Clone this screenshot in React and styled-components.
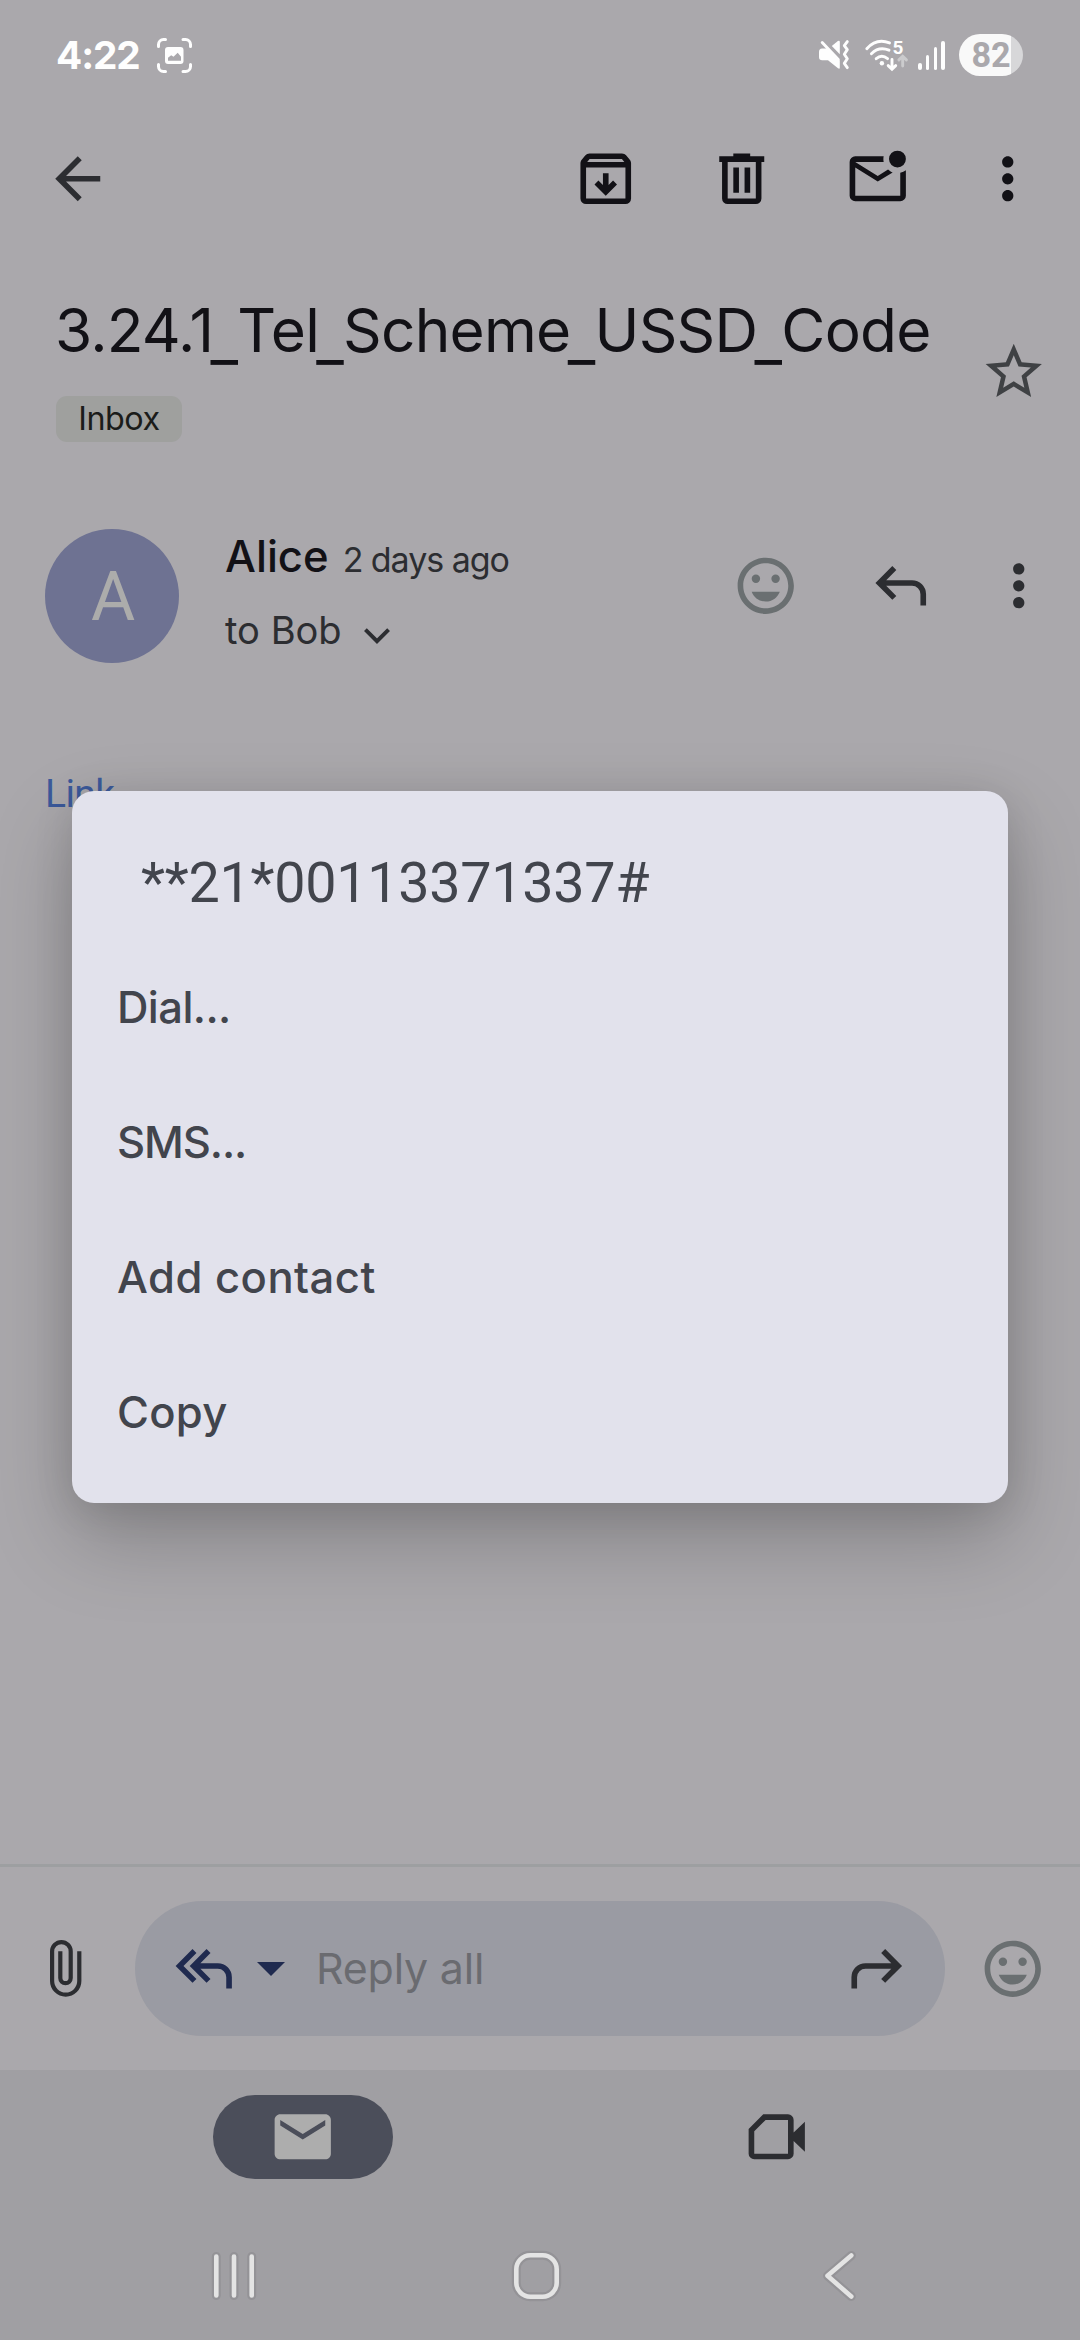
import React from "react";
import styled, { createGlobalStyle } from "styled-components";

const color = {
  surface: "#aaa8ac",
  navSurface: "#a09fa3",
  ink: "#121116",
  inkSoft: "#2c2d31",
  inkMuted: "#3f4144",
  smiley: "#6a6f71",
  white: "#fefefe",
};

const sans = `Inter, "Google Sans", Roboto, sans-serif`;
const roboto = `Roboto, "Noto Sans", sans-serif`;

const GlobalStyle = createGlobalStyle`
  * { box-sizing: border-box; }
  html, body { margin: 0; background: ${color.surface}; }
`;

/* ---------- shared ---------- */

const Screen = styled.div`
  position: relative;
  display: flex;
  flex-direction: column;
  width: 1080px;
  height: 2340px;
  overflow: hidden;
  background: ${color.surface};
  font-family: ${sans};
  color: ${color.ink};
`;

const Glyph = styled.svg`
  display: block;
  flex: none;
  width: ${(p) => p.$w || 67.5}px;
  height: ${(p) => p.$h || p.$w || 67.5}px;
  overflow: visible;
`;

const IconButton = styled.button`
  display: flex;
  flex: none;
  padding: 0;
  border: 0;
  background: none;
  color: ${(p) => p.$color || color.ink};
`;

const PATHS = {
  back: "M20 11H7.83l5.59-5.59L12 4l-8 8 8 8 1.41-1.41L7.83 13H20v-2z",
  archive:
    "M5 21q-.825 0-1.412-.587T3 19V6.525q0-.35.113-.675t.337-.6L4.7 3.725q.275-.35.687-.538T6.25 3h11.5q.45 0 .863.188t.687.537l1.25 1.525q.225.275.338.6t.112.675V19q0 .825-.587 1.413T19 21zm.4-15h13.2l-.85-1H6.25zM5 19h14V8H5zm7-1 4-4-1.4-1.4-1.6 1.6V10h-2v4.2l-1.6-1.6L8 14z",
  trash:
    "M7 21q-.825 0-1.412-.587T5 19V6H4V4h5V3h6v1h5v2h-1v13q0 .825-.587 1.413T17 21zM17 6H7v13h10zM9 17h2V8H9zm4 0h2V8h-2z",
  unread:
    "M4 20q-.825 0-1.412-.587T2 18V6q0-.825.588-1.412T4 4h10.1q-.1.5-.1 1t.1 1H4l8 5 3.65-2.275q.375.325.788.588t.862.462L12 13 4 8v10h16V9.9q.575-.125 1.075-.35T22 9v9q0 .825-.587 1.413T20 20zM19 8q-1.25 0-2.125-.875T16 5t.875-2.125T19 2t2.125.875T22 5t-.875 2.125T19 8",
  more: "M12 8c1.1 0 2-.9 2-2s-.9-2-2-2-2 .9-2 2 .9 2 2 2zm0 2c-1.1 0-2 .9-2 2s.9 2 2 2 2-.9 2-2-.9-2-2-2zm0 6c-1.1 0-2 .9-2 2s.9 2 2 2 2-.9 2-2-.9-2-2-2z",
  star: "M22 9.24l-7.19-.62L12 2 9.19 8.63 2 9.24l5.46 4.73L5.82 21 12 17.27 18.18 21l-1.63-7.03L22 9.24zM12 15.4l-3.76 2.27 1-4.28-3.32-2.88 4.38-.38L12 6.1l1.71 4.04 4.38.38-3.32 2.88 1 4.28L12 15.4z",
  smile:
    "M11.99 2C6.47 2 2 6.48 2 12s4.47 10 9.99 10C17.52 22 22 17.52 22 12S17.52 2 11.99 2zM12 20c-4.42 0-8-3.58-8-8s3.58-8 8-8 8 3.58 8 8-3.58 8-8 8zM15.5 11a1.5 1.5 0 1 0 0-3 1.5 1.5 0 0 0 0 3zM8.5 11a1.5 1.5 0 1 0 0-3 1.5 1.5 0 0 0 0 3zM12 17.6c2.3 0 4.2-1.4 5-3.5H7c.8 2.1 2.7 3.5 5 3.5z",
  reply:
    "M19 19v-4q0-1.25-.875-2.125T16 12H6.825l3.6 3.6L9 17l-6-6 6-6 1.425 1.4-3.6 3.6H16q2.075 0 3.538 1.463T21 15v4z",
  replyAll:
    "M8 17 2 11l6-6 1.4 1.4L4.8 11l4.6 4.6zM20 19v-4q0-1.25-.875-2.125T17 12h-6.2l3.6 3.6L13 17l-6-6 6-6 1.4 1.4-3.6 3.6H17q2.075 0 3.538 1.463T22 15v4z",
  forward:
    "M5 19v-4q0-1.25.875-2.125T8 12h9.175l-3.6 3.6L15 17l6-6-6-6-1.425 1.4 3.6 3.6H8q-2.075 0-3.538 1.463T3 15v4z",
  mail: "M20 4H4c-1.1 0-2 .9-2 2v12c0 1.1.9 2 2 2h16c1.1 0 2-.9 2-2V6c0-1.1-.9-2-2-2zm0 4l-8 5-8-5V6l8 5 8-5v2z",
  video:
    "M7.2 4H16a2 2 0 0 1 2 2v12a2 2 0 0 1-2 2H4a2 2 0 0 1-2-2V9.2zM8.05 6 4 10.05V18h12V6zM18 10.5l4-3.8v10.6l-4-3.8z",
};

const Icon = ({ name }) => (
  <Glyph viewBox="0 0 24 24" fill="currentColor" aria-hidden="true">
    <path fillRule="evenodd" d={PATHS[name]} />
  </Glyph>
);

/* ---------- status bar ---------- */

const StatusBar = styled.header`
  display: flex;
  flex: none;
  align-items: center;
  height: 110px;
  padding: 0 57px 0 56px;
  color: ${color.white};
`;

const Clock = styled.time`
  width: 101px;
  font: 700 38.8px/60px ${sans};
  letter-spacing: -1.1px;
`;

const StatusIcons = styled.div`
  display: flex;
  align-items: center;
  margin-left: auto;
`;

const SignalBars = styled.div`
  display: flex;
  align-items: flex-end;
  gap: 4.1px;
  height: 29px;
  margin: 0 14px 0 9.5px;
`;

const SignalBar = styled.i`
  width: 3.7px;
  height: ${(p) => p.$h}px;
  border-radius: 2px;
  background: ${color.white};
`;

const Battery = styled.div`
  display: flex;
  align-items: center;
  justify-content: center;
  width: 64px;
  height: 42px;
  border-radius: 21px;
  background: linear-gradient(90deg, #f9f9f9 51.7px, #d7d7d9 51.7px);
  color: ${color.surface};
  font: 700 34.2px/42px ${roboto};
`;

const ScanIcon = () => (
  <Glyph $w={35} viewBox="0 0 35 35" fill="none">
    <path
      d="M1.5 8.5v-2a5 5 0 0 1 5-5h2M26 1.5h2.5a5 5 0 0 1 5 5v2M33.5 26.5v2a5 5 0 0 1-5 5H26M8.5 33.5h-2a5 5 0 0 1-5-5v-2"
      stroke="#fefefe"
      strokeWidth="3"
      strokeLinecap="round"
    />
    <path
      fill="#fefefe"
      fillRule="evenodd"
      d="M11 9h12.5a3 3 0 0 1 3 3v11a3 3 0 0 1-3 3H11a3 3 0 0 1-3-3V12a3 3 0 0 1 3-3zM11 22.8h13v-4.1l-3.3-4-4.2 4-2.3-1.5L11 19.7z"
    />
  </Glyph>
);

const MuteIcon = () => (
  <Glyph $w={30} viewBox="0 0 30 30" fill="#fefefe">
    <path d="M3 8.5h5.5L20.8 20.5v7q0 2-1.8.8L9 20.3H3.2Q0 20.3 0 17v-5q0-3.5 3-3.5z" />
    <path d="M12.8 5.9 18.9 1q1.9-1 1.9 1v12.2z" />
    <path
      d="M3.2 2.5 19.3 19.5M28.3 1.6 25.3 5.6l3 4-3 4.6 3 4.6-3 4.6 3 4.2"
      fill="none"
      stroke="#fefefe"
      strokeWidth="2.9"
      strokeLinecap="round"
      strokeLinejoin="round"
    />
  </Glyph>
);

const WifiIcon = styled(({ className }) => (
  <svg className={className} viewBox="0 0 43 32" fill="none">
    <g stroke="#fefefe" strokeWidth="2.9" strokeLinecap="round">
      <path d="M1.8 9.7Q11.5-1.2 24.5 3.9M6.4 14.7Q14 7.2 24 11.2M11.2 19.7Q16.8 15 22.6 19.7" />
      <path d="M27 20.5V29M23.2 26.6 27 30.2l3.7-3.6" />
      <path stroke="#cbcbcd" d="M37.7 27V17.8M33.9 20.9 37.7 17.2l3.7 3.7" />
    </g>
    <circle cx="16.9" cy="24.3" r="2.2" fill="#fefefe" />
    <text x="27.5" y="15">5</text>
  </svg>
))`
  display: block;
  width: 43px;
  height: 32px;
  margin-left: 16px;
  overflow: visible;

  text {
    fill: ${color.white};
    font: 700 19px ${roboto};
  }
`;

/* ---------- app bar ---------- */

const AppBar = styled.nav`
  display: flex;
  flex: none;
  align-items: center;
  height: 137px;
  padding: 0 39px 0 43.5px;
`;

const BarActions = styled.div`
  display: flex;
  gap: 68.5px;
  margin: 0 62.5px 0 auto;
`;

/* ---------- subject ---------- */

const Subject = styled.section`
  display: flex;
  flex: none;
  align-items: center;
  justify-content: space-between;
  padding: 46px 33px 0 55px;
`;

const Title = styled.h1`
  height: 76px;
  margin: 0 0 27px;
  font: 400 60.3px/76px ${sans};
  letter-spacing: -0.75px;
`;

/* Drops the underscore clear of the baseline. */
const Underscore = styled.span`
  margin-left: -2.7px;
  line-height: 0;
  vertical-align: -8px;
`;

const Label = styled.span`
  display: block;
  width: 126px;
  margin-left: 1px;
  border-radius: 11px;
  background: #9fa09e;
  text-align: center;
  font: 400 32.3px/46px ${sans};
  letter-spacing: -0.5px;
  color: #1b1c1a;
`;

const StarButton = styled(IconButton)`
  padding-top: 8px;
`;

/* ---------- sender ---------- */

const Sender = styled.section`
  display: flex;
  flex: none;
  align-items: flex-start;
  padding: 84px 28px 0 45px;
`;

const Avatar = styled.div`
  width: 134px;
  height: 134px;
  margin: 3px 46px 0 0;
  padding-left: 2px;
  border-radius: 50%;
  background: #6e7292;
  text-align: center;
  font: 400 67.8px/136px ${roboto};
  color: #acacab;
`;

const SenderLines = styled.div`
  display: flex;
  flex: 1;
  flex-direction: column;
  gap: 13px;
  padding-top: 1px;
`;

const SenderLine = styled.div`
  display: flex;
  align-items: baseline;
  height: 60px;
  line-height: 60px;
`;

const SenderName = styled.strong`
  font-size: 43.6px;
  font-weight: 500;
`;

const SentAt = styled.span`
  margin-left: 14px;
  font-size: 34px;
  letter-spacing: -1.05px;
  color: ${color.inkSoft};
`;

const Recipient = styled.span`
  margin-right: 22px;
  font-size: 38.1px;
  color: ${color.inkSoft};
`;

const Chevron = styled(Glyph)`
  margin-bottom: 5px;
`;

const SenderActions = styled.div`
  display: flex;
  align-items: center;
  height: 120px;
`;

const MoreButton = styled(IconButton)`
  margin-left: 50px;
`;

const ReplyButton = styled(IconButton)`
  margin-left: 67.9px;
`;

/* ---------- message ---------- */

const MessageBody = styled.main`
  flex: 1;
  padding: 106px 45px 0;
  font: 400 39px/50px ${roboto};
  letter-spacing: -0.6px;
`;

const BodyLink = styled.a`
  color: #3c5a9b;
`;

/* ---------- reply bar ---------- */

const ReplyBar = styled.footer`
  display: flex;
  flex: none;
  align-items: center;
  height: 206px;
  padding-left: 50px;
  border-top: 3px solid #9d9fa1;
`;

const ReplyField = styled.div`
  display: flex;
  align-items: center;
  width: 810px;
  height: 135px;
  margin: 0 33.5px 0 53.5px;
  padding: 0 34.5px;
  border-radius: 68px;
  background: #9a9ba3;
`;

const Caret = styled.i`
  margin: 0 31px 0 20px;
  border: solid transparent;
  border-width: 14.5px 14.2px 0;
  border-top-color: #1f2a4f;
`;

const Placeholder = styled.span`
  flex: 1;
  padding-bottom: 2px;
  font: 400 42.9px/60px ${sans};
  letter-spacing: -0.19px;
  color: #6a6b70;
`;

/* ---------- bottom navigation ---------- */

const BottomArea = styled.div`
  flex: none;
  height: 270px;
  background: ${color.navSurface};
`;

const Tabs = styled.nav`
  display: grid;
  grid-template-columns: 474px 474px;
  place-items: center;
  height: 134px;
  padding-left: 66px;
`;

const Tab = styled.div`
  display: flex;
  align-items: center;
  justify-content: center;
  width: 180px;
  height: 84px;
  border-radius: 42px;
  background: ${(p) => (p.$active ? "#4b4e5a" : "none")};
  color: ${(p) => (p.$active ? "#adadad" : color.inkSoft)};
`;

const SystemNav = styled.nav`
  display: grid;
  grid-template-columns: repeat(3, 302.5px);
  place-items: center;
  height: 144px;
  padding-left: 83px;
`;

const NavGlyph = ({ w, h, children }) => (
  <Glyph $w={w} $h={h} viewBox={`0 0 ${w} ${h}`} fill="none" strokeLinecap="round" strokeLinejoin="round">
    <g stroke="#949397" strokeWidth="9">{children}</g>
    <g stroke="#e4e4e4" strokeWidth="4.6">{children}</g>
  </Glyph>
);

/* ---------- dialog ---------- */

const Dialog = styled.div`
  position: absolute;
  top: 791px;
  left: 72px;
  width: 936px;
  height: 712px;
  padding: 52px 45px 0;
  border-radius: 22px;
  background: #e2e2ec;
  box-shadow: 0 36px 84px rgba(0, 0, 0, 0.22), 0 6px 40px rgba(0, 0, 0, 0.11);
  color: #42454d;
`;

const DialogTitle = styled.h2`
  margin: 0 0 30px;
  padding-left: 24px;
  font: 400 55.7px/80px ${roboto};
  letter-spacing: -0.28px;
`;

const MenuItem = styled.div`
  height: 135px;
  font: 500 43.6px/110px ${sans};
  letter-spacing: ${(p) => p.$tracking}px;
`;

const menu = [
  { text: "Dial...", tracking: -0.6 },
  { text: "SMS...", tracking: -1.1 },
  { text: "Add contact", tracking: 0.47 },
  { text: "Copy", tracking: 0.25 },
];

const subjectParts = "3.24.1_Tel_Scheme_USSD_Code".split(/(_)/);

export default function App() {
  return (
    <Screen>
      <GlobalStyle />

      <StatusBar>
        <Clock>4:22</Clock>
        <ScanIcon />
        <StatusIcons>
          <MuteIcon />
          <WifiIcon />
          <SignalBars>
            {[7, 15, 22.5, 29].map((h) => (
              <SignalBar key={h} $h={h} />
            ))}
          </SignalBars>
          <Battery>82</Battery>
        </StatusIcons>
      </StatusBar>

      <AppBar>
        <IconButton $color={color.inkSoft}><Icon name="back" /></IconButton>
        <BarActions>
          <IconButton><Icon name="archive" /></IconButton>
          <IconButton><Icon name="trash" /></IconButton>
          <IconButton><Icon name="unread" /></IconButton>
        </BarActions>
        <IconButton><Icon name="more" /></IconButton>
      </AppBar>

      <Subject>
        <div>
          <Title>
            {subjectParts.map((part, i) =>
              part === "_" ? <Underscore key={i}>_</Underscore> : part
            )}
          </Title>
          <Label>Inbox</Label>
        </div>
        <StarButton $color={color.inkMuted}><Icon name="star" /></StarButton>
      </Subject>

      <Sender>
        <Avatar>A</Avatar>
        <SenderLines>
          <SenderLine>
            <SenderName>Alice</SenderName>
            <SentAt>2 days ago</SentAt>
          </SenderLine>
          <SenderLine>
            <Recipient>to Bob</Recipient>
            <Chevron $w={26} $h={16} viewBox="0 0 26 16" fill="none" stroke={color.inkSoft} strokeWidth="3.9">
              <path d="M1.4 1.6 13 13.2 24.6 1.6" />
            </Chevron>
          </SenderLine>
        </SenderLines>
        <SenderActions>
          <IconButton $color={color.smiley}><Icon name="smile" /></IconButton>
          <ReplyButton $color={color.inkSoft}><Icon name="reply" /></ReplyButton>
          <MoreButton $color={color.inkSoft}><Icon name="more" /></MoreButton>
        </SenderActions>
      </Sender>

      <MessageBody>
        <BodyLink>Link</BodyLink>
      </MessageBody>

      <ReplyBar>
        <Glyph $w={31.5} $h={57} viewBox="0 0 31.5 57" fill="none" stroke={color.inkSoft} strokeWidth="4.2">
          <path d="M29.3 11.3V41A13.6 13.6 0 0 1 2.1 41V11.4A9.3 9.3 0 0 1 20.7 11.4V38A5.2 5.2 0 0 1 10.3 38V11.3" />
        </Glyph>
        <ReplyField>
          <IconButton $color="#1f2a4f"><Icon name="replyAll" /></IconButton>
          <Caret />
          <Placeholder>Reply all</Placeholder>
          <IconButton $color={color.inkSoft}><Icon name="forward" /></IconButton>
        </ReplyField>
        <IconButton $color={color.smiley}><Icon name="smile" /></IconButton>
      </ReplyBar>

      <BottomArea>
        <Tabs>
          <Tab $active><Icon name="mail" /></Tab>
          <Tab><Icon name="video" /></Tab>
        </Tabs>
        <SystemNav>
          <NavGlyph w={40} h={44}>
            <path d="M2.3 2.5v39M20 2.5v39M37.7 2.5v39" />
          </NavGlyph>
          <NavGlyph w={45} h={46}>
            <rect x="2.3" y="2.3" width="40.4" height="41.4" rx="14" />
          </NavGlyph>
          <NavGlyph w={29} h={46}>
            <path d="M26.3 2.5 2.5 22.8 26.3 43.5" />
          </NavGlyph>
        </SystemNav>
      </BottomArea>

      <Dialog role="dialog">
        <DialogTitle>**21*00113371337#</DialogTitle>
        {menu.map((item) => (
          <MenuItem key={item.text} $tracking={item.tracking}>{item.text}</MenuItem>
        ))}
      </Dialog>
    </Screen>
  );
}
